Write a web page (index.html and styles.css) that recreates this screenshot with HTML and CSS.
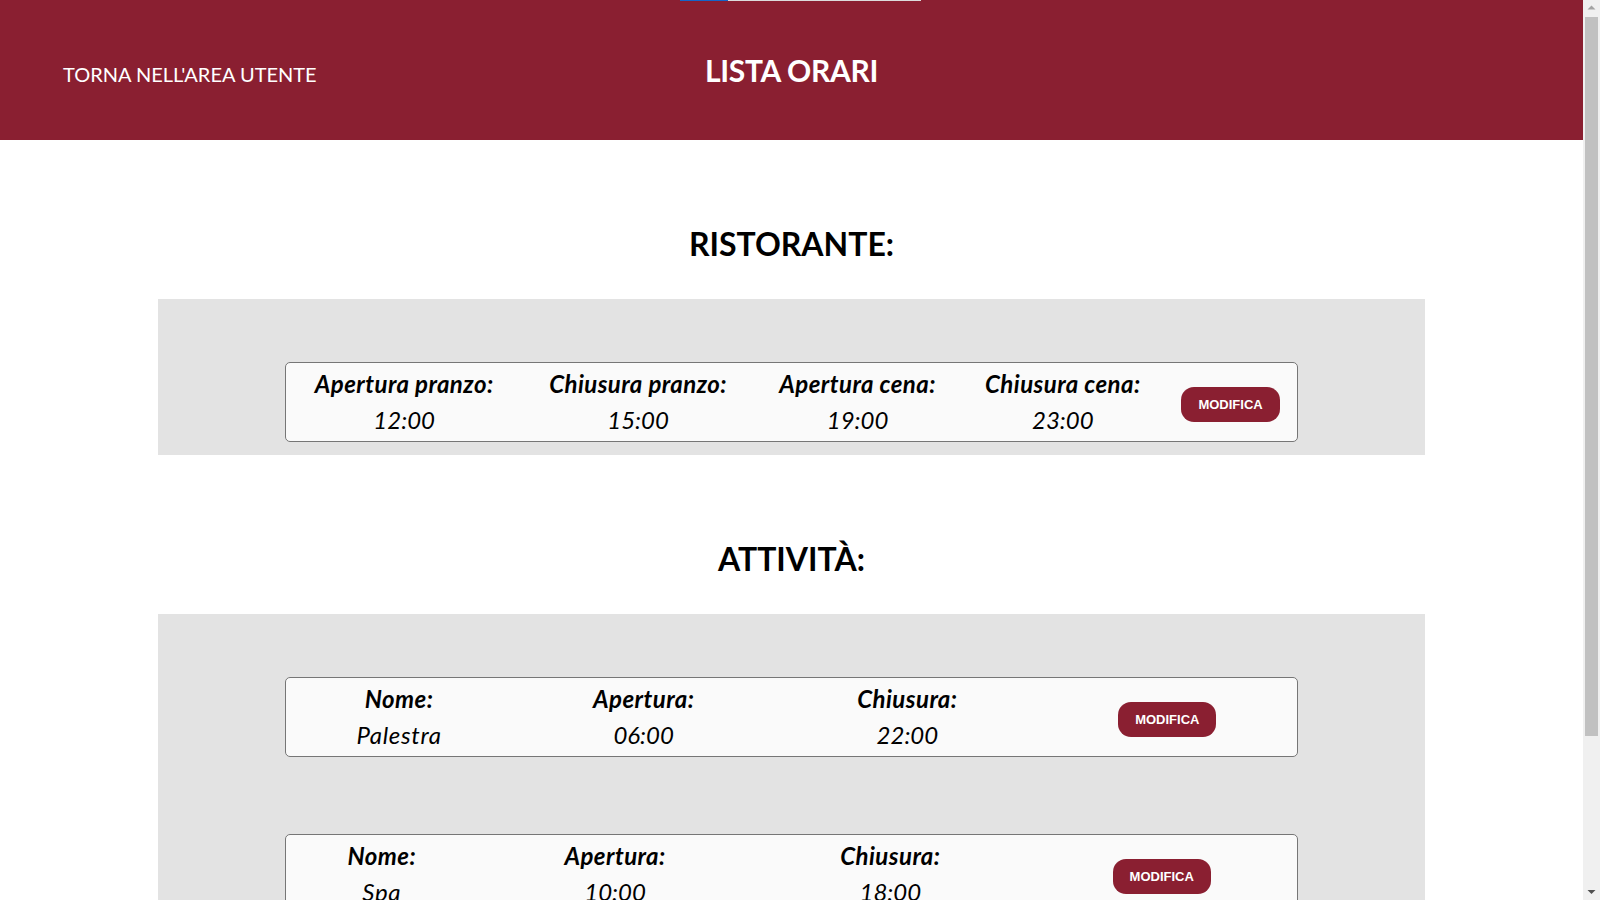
FILE: index.html
```html
<!DOCTYPE html>
<html lang="it">
<head>
<meta charset="utf-8">
<title>Lista orari</title>
<link rel="stylesheet" href="styles.css">
</head>
<body>
<div class="layout">
  <div class="page">
    <div class="loadbar"><span class="loadbar-fill"></span></div>
    <header class="topbar">
      <a class="back-link" href="#">TORNA NELL'AREA UTENTE</a>
      <h1 class="page-title">LISTA ORARI</h1>
      <span class="topbar-spacer"></span>
    </header>
    <main>
      <h2 class="section-title">RISTORANTE:</h2>
      <section class="panel">
        <div class="card">
          <table class="hours">
            <tr>
              <td><span class="label">Apertura pranzo:</span><br><span class="value">12:00</span></td>
              <td><span class="label">Chiusura pranzo:</span><br><span class="value">15:00</span></td>
              <td><span class="label">Apertura cena:</span><br><span class="value">19:00</span></td>
              <td><span class="label">Chiusura cena:</span><br><span class="value">23:00</span></td>
              <td><button class="edit-btn" type="button">MODIFICA</button></td>
            </tr>
          </table>
        </div>
      </section>

      <h2 class="section-title">ATTIVITÀ:</h2>
      <section class="panel">
        <div class="card">
          <table class="hours">
            <tr>
              <td><span class="label">Nome:</span><br><span class="value name">Palestra</span></td>
              <td><span class="label">Apertura:</span><br><span class="value">06:00</span></td>
              <td><span class="label">Chiusura:</span><br><span class="value">22:00</span></td>
              <td><button class="edit-btn" type="button">MODIFICA</button></td>
            </tr>
          </table>
        </div>
        <div class="card">
          <table class="hours">
            <tr>
              <td><span class="label">Nome:</span><br><span class="value name">Spa</span></td>
              <td><span class="label">Apertura:</span><br><span class="value">10:00</span></td>
              <td><span class="label">Chiusura:</span><br><span class="value">18:00</span></td>
              <td><button class="edit-btn" type="button">MODIFICA</button></td>
            </tr>
          </table>
        </div>
        <div class="card">
          <table class="hours">
            <tr>
              <td><span class="label">Nome:</span><br><span class="value name">Piscina</span></td>
              <td><span class="label">Apertura:</span><br><span class="value">08:00</span></td>
              <td><span class="label">Chiusura:</span><br><span class="value">20:00</span></td>
              <td><button class="edit-btn" type="button">MODIFICA</button></td>
            </tr>
          </table>
        </div>
      </section>
    </main>
  </div>
  <div class="scrollbar" aria-hidden="true">
    <div class="sb-btn">
      <svg width="17" height="17" viewBox="0 0 17 17"><path d="M4.5 9.5 L8.5 5.5 L12.5 9.5 Z" fill="#a3a3a3"/></svg>
    </div>
    <div class="sb-thumb"></div>
    <div class="sb-rest"></div>
    <div class="sb-btn">
      <svg width="17" height="17" viewBox="0 0 17 17"><path d="M4.5 7 L8.5 11 L12.5 7 Z" fill="#505050"/></svg>
    </div>
  </div>
</div>
</body>
</html>
```
FILE: styles.css
```css
html {
  background: #ffffff;
}

body {
  margin: 0;
  font-family: Lato, "Open Sans", sans-serif;
  color: #000;
  background: #ffffff;
}

.layout {
  display: flex;
  align-items: flex-start;
}

.page {
  flex: 1;
  min-width: 0;
}

.scrollbar {
  position: sticky;
  top: 0;
  flex: 0 0 17px;
  height: 100vh;
  background: #f0f0f0;
  display: flex;
  flex-direction: column;
}

.sb-btn {
  height: 17px;
  flex: 0 0 17px;
}

.sb-btn svg {
  display: block;
}

.sb-thumb {
  flex: 0 0 719px;
  margin: 0 2px;
  background: #c1c1c1;
}

.sb-rest {
  flex: 1;
}

.loadbar {
  position: absolute;
  top: 0;
  left: 680px;
  width: 241px;
  height: 1px;
  background: #dcdcdc;
  display: flex;
  z-index: 2;
}

.loadbar-fill {
  width: 48px;
  background: #1565c8;
}

.topbar {
  height: 140px;
  background: #8a1f31;
  color: #fff;
  display: grid;
  grid-template-columns: 1fr auto 1fr;
  align-items: center;
}

.back-link {
  justify-self: start;
  padding: 7px 0 0 63px;
  font-size: 20px;
  line-height: 24px;
  color: #fff;
  text-decoration: none;
}

.page-title {
  margin: 0;
  font-size: 30px;
  font-weight: 700;
  line-height: 36px;
  letter-spacing: -0.3px;
}

.section-title {
  margin: 85px 0 36px;
  text-align: center;
  font-size: 32px;
  font-weight: 700;
  line-height: 38px;
}

.panel {
  width: 80%;
  margin: 0 auto;
  padding: 63px 0 13px;
  background: #e3e3e3;
  display: flex;
  flex-direction: column;
  align-items: center;
  gap: 77px;
}

.card {
  width: 80%;
  box-sizing: border-box;
  border: 1px solid #767676;
  border-radius: 5px;
  background: #fafafa;
}

.hours {
  width: 100%;
  border-spacing: 2px;
}

.hours td {
  padding: 1px;
  text-align: center;
  vertical-align: middle;
  font-size: 24px;
  line-height: 36px;
}

.label {
  font-weight: 700;
  font-style: italic;
  letter-spacing: 0.45px;
}

.value {
  font-style: italic;
}

.value.name {
  letter-spacing: 0.7px;
}

.edit-btn {
  display: inline-block;
  vertical-align: middle;
  margin-top: 5px;
  padding: 10px 17px;
  border: none;
  border-radius: 13px;
  background: #8a1f31;
  color: #fff;
  font-family: "Liberation Sans", Arial, sans-serif;
  font-size: 13px;
  font-weight: 700;
  line-height: 15px;
  cursor: pointer;
}
```
